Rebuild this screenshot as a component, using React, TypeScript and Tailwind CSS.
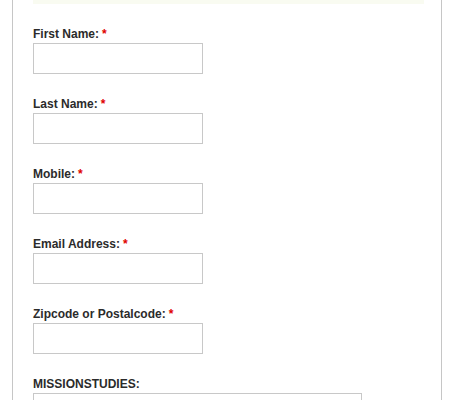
const fields = [
  { label: 'First Name:', required: true },
  { label: 'Last Name:', required: true },
  { label: 'Mobile:', required: true },
  { label: 'Email Address:', required: true },
  { label: 'Zipcode or Postalcode:', required: true },
];

export default function App() {
  return (
    <div className="h-[400px] overflow-hidden bg-white font-['Liberation_Sans',Arial,sans-serif]">
      <div className="ml-[12px] w-[430px] h-[400px] border-x border-[#c6c6c6] pl-[20px] pr-[17px]">
        {/* faded tail of the intro text above */}
        <div className="h-[4px] bg-[#f9fbf1]" />

        <div className="pt-[20px] flex flex-col gap-[20px]">
          {fields.map((f) => (
            <Field key={f.label} label={f.label} required={f.required} />
          ))}
          <div className="flex flex-col">
            <label className="pt-[2px] text-[12px] leading-[17px] font-bold text-[#2b2b2b]">
              MISSIONSTUDIES:
            </label>
            <input className="w-[329px] h-[31px] border border-[#c8c8c8] bg-white" />
          </div>
        </div>
      </div>
    </div>
  );
}

function Field({ label, required }: { label: string; required?: boolean }) {
  return (
    <div className="flex flex-col">
      <label className="pt-[2px] text-[12px] leading-[17px] font-bold text-[#2b2b2b]">
        {label}
        {required && <span className="text-[#e00000] ml-[3px]">*</span>}
      </label>
      <input className="w-[170px] h-[31px] border border-[#c8c8c8] bg-white" />
    </div>
  );
}
